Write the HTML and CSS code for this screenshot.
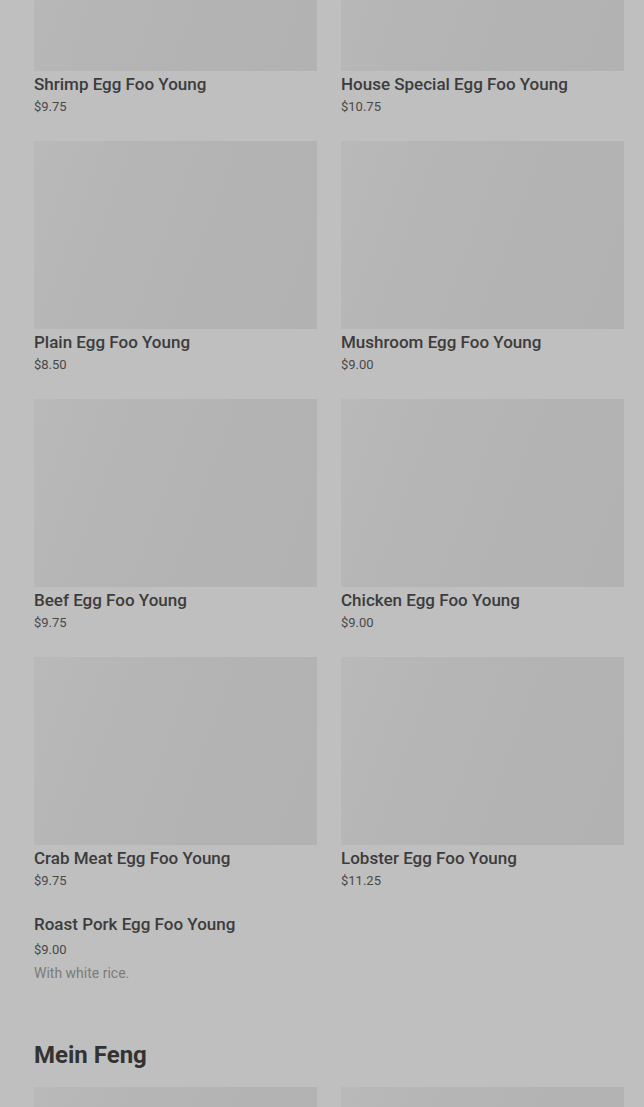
FILE: index.html
```html
<!DOCTYPE html>
<html lang="en">
<head>
<meta charset="utf-8">
<title>Egg Foo Young</title>
<link rel="stylesheet" href="styles.css">
</head>
<body>
<main class="menu">
  <section class="section">
    <div class="grid">
      <div class="item"><div class="thumb"></div><div class="name">Shrimp Egg Foo Young</div><div class="price">$9.75</div></div>
      <div class="item"><div class="thumb"></div><div class="name">House Special Egg Foo Young</div><div class="price">$10.75</div></div>
      <div class="item"><div class="thumb"></div><div class="name">Plain Egg Foo Young</div><div class="price">$8.50</div></div>
      <div class="item"><div class="thumb"></div><div class="name">Mushroom Egg Foo Young</div><div class="price">$9.00</div></div>
      <div class="item"><div class="thumb"></div><div class="name">Beef Egg Foo Young</div><div class="price">$9.75</div></div>
      <div class="item"><div class="thumb"></div><div class="name">Chicken Egg Foo Young</div><div class="price">$9.00</div></div>
      <div class="item"><div class="thumb"></div><div class="name">Crab Meat Egg Foo Young</div><div class="price">$9.75</div></div>
      <div class="item"><div class="thumb"></div><div class="name">Lobster Egg Foo Young</div><div class="price">$11.25</div></div>
      <div class="item item-text"><div class="name">Roast Pork Egg Foo Young</div><div class="price">$9.00</div><div class="desc">With white rice.</div></div>
    </div>
  </section>
  <section class="section">
    <h2 class="heading">Mein Feng</h2>
    <div class="grid">
      <div class="item"><div class="thumb"></div></div>
      <div class="item"><div class="thumb"></div></div>
    </div>
  </section>
</main>
</body>
</html>
```
FILE: styles.css
```css
html, body {
  margin: 0;
  padding: 0;
  background: #bfbfbf;
}
body {
  font-family: Roboto, "Liberation Sans", sans-serif;
  color: #3a3a3a;
  overflow: hidden;
  height: 1107px;
}
.menu {
  padding: 0 20px 0 34px;
  margin-top: -117px;
}
.grid {
  display: grid;
  grid-template-columns: 1fr 1fr;
  column-gap: 24px;
  row-gap: 25px;
}
.thumb {
  height: 188px;
  background: linear-gradient(110deg, #b9b9b9 0%, #b5b5b5 35%, #b3b3b3 60%, #b2b2b2 100%);
}
.name {
  margin-top: 3px;
  font-size: 17px;
  line-height: 20px;
  font-weight: 500;
  color: #3c3c3c;
}
.price {
  margin-top: 4px;
  font-size: 13px;
  line-height: 18px;
  color: #494949;
}
.item-text .name {
  margin-top: -1px;
}
.item-text .price {
  margin-top: 7px;
}
.desc {
  margin-top: 5px;
  font-size: 14px;
  line-height: 18px;
  color: #7c7c7c;
}
.heading {
  margin: 57px 0 16px;
  font-size: 24px;
  line-height: 32px;
  font-weight: 700;
  color: #333333;
}
```
